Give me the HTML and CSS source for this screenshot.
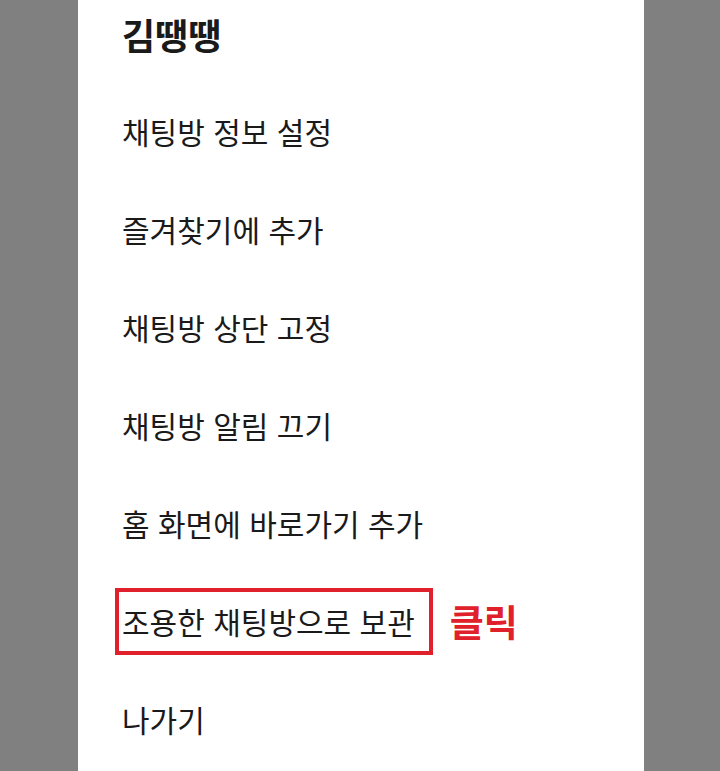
FILE: index.html
```html
<!DOCTYPE html>
<html lang="ko">
<head>
    <meta charset="UTF-8">
    <title>채팅방 메뉴</title>
    <link rel="stylesheet" href="styles.css">
</head>
<body>
    <div class="menu-panel">
        <h1 class="room-name">김땡땡</h1>
        <ul class="menu-list">
            <li class="menu-item">채팅방 정보 설정</li>
            <li class="menu-item">즐겨찾기에 추가</li>
            <li class="menu-item">채팅방 상단 고정</li>
            <li class="menu-item">채팅방 알림 끄기</li>
            <li class="menu-item">홈 화면에 바로가기 추가</li>
            <li class="menu-item">
                <span class="highlight">조용한 채팅방으로 보관</span>
                <span class="click-note">클릭</span>
            </li>
            <li class="menu-item">나가기</li>
        </ul>
    </div>
</body>
</html>
```

FILE: styles.css
```css
html, body {
    margin: 0;
    padding: 0;
    height: 100%;
}
body {
    background-color: #808080;
    font-family: "Noto Sans CJK KR", "Noto Sans", sans-serif;
    color: #1a1a1a;
    overflow: hidden;
}
.menu-panel {
    width: 566px;
    height: 100%;
    margin-left: 78px;
    background-color: #fff;
    padding-left: 44px;
    box-sizing: border-box;
}
.room-name {
    margin: 0;
    font-size: 36px;
    font-weight: 700;
    line-height: 68px;
}
.menu-list {
    list-style: none;
    margin: 0;
    padding: 0;
}
.menu-item {
    display: flex;
    align-items: center;
    height: 98px;
    font-size: 30px;
}
/* first row sits a little closer to the title */
.menu-list .menu-item:first-child {
    height: 112px;
    align-items: flex-end;
    padding-bottom: 27px;
    box-sizing: border-box;
}
.highlight {
    border: 4px solid #e0202a;
    padding: 7px 14px 8px 3px;
    margin-left: -7px;
}
.click-note {
    color: #e0202a;
    font-weight: 700;
    font-size: 37px;
    margin-left: 17px;
}
```
